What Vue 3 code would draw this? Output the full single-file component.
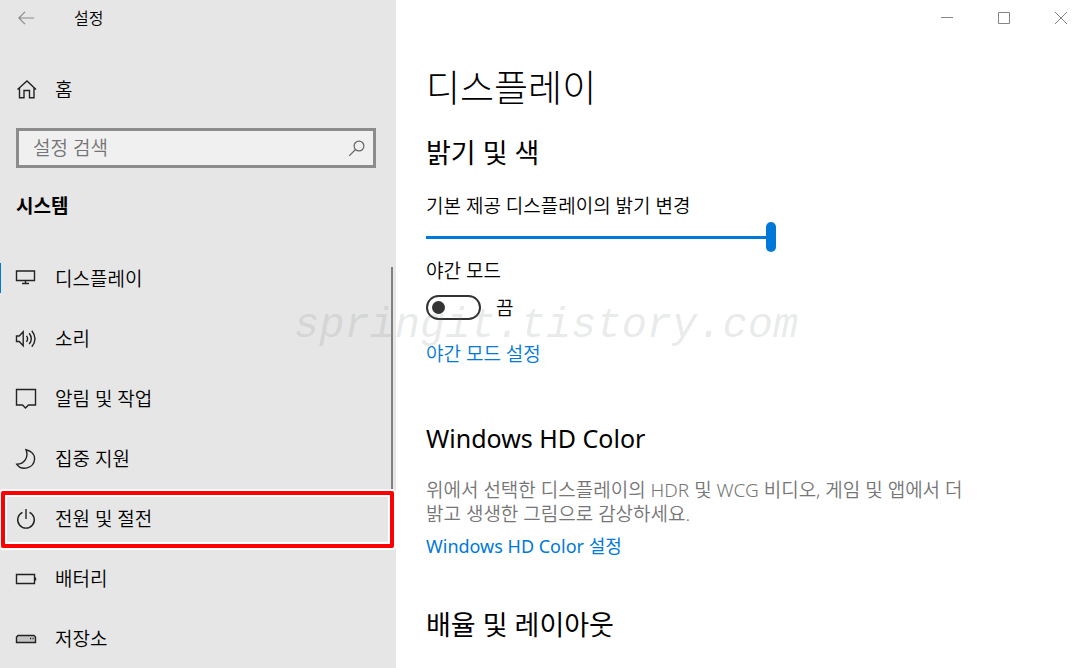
<script setup>
import { ref } from 'vue'

const query = ref('')
const brightness = ref(100)
const nightMode = ref(false)

const items = [
  { id: 'display', label: '디스플레이', current: true },
  { id: 'sound', label: '소리' },
  { id: 'notify', label: '알림 및 작업' },
  { id: 'focus', label: '집중 지원' },
  { id: 'power', label: '전원 및 절전', marked: true },
  { id: 'battery', label: '배터리' },
  { id: 'storage', label: '저장소' },
]
</script>

<template>
  <div class="window">
    <aside class="sidebar">
      <header class="titlebar">
        <button class="back" type="button" aria-label="뒤로">
          <svg width="16" height="14" viewBox="0 0 16 14"><path d="M7 .8 .8 7 7 13.200M.8 7H16" /></svg>
        </button>
        <span class="app-name">설정</span>
      </header>

      <a class="row home" href="#home">
        <svg class="icon" width="22" height="22" viewBox="0 0 22 22"><path d="M2.500 11.500 12 3l9 8.500M4.500 10v9.700h4.500v-7.200h5.500v7.200H19V10" /></svg>
        <span>홈</span>
      </a>

      <div class="search">
        <input v-model="query" type="text" placeholder="설정 검색" aria-label="설정 검색" />
        <svg width="18" height="18" viewBox="0 0 18 18"><circle cx="12" cy="7" r="4.900" /><path d="M8.500 10.500 2.200 16.800" /></svg>
      </div>

      <h2 class="group">시스템</h2>

      <nav class="nav">
        <a
          v-for="item in items"
          :key="item.id"
          class="row"
          :class="{ current: item.current, marked: item.marked }"
          :href="'#' + item.id"
        >
          <svg class="icon" width="22" height="22" viewBox="0 0 22 22">
            <path v-if="item.id === 'display'" d="M1.500 4h18v9.500h-18zM10.500 13.500v3M7 16.500h7" />
            <path v-else-if="item.id === 'sound'" d="M1.500 9h2.700l4-4.300v14l-4-4.200H1.500zM11.500 8.800q2.200 3 0 6M14.200 6.300q4.200 5.400 0 10.800M16.800 3.700q6.400 8 0 16" />
            <path v-else-if="item.id === 'notify'" d="M1.500 2.500h19v15.500h-7l-3 3-3-3h-6z" />
            <path v-else-if="item.id === 'focus'" d="M11 2.700C17 4 20 8 19.500 12.700 18.500 21.500 6.500 24 1.800 17.300 9.500 17 14 10 11 2.700z" />
            <path v-else-if="item.id === 'power'" d="M7.500 5.300a8.300 8.300 0 1 0 7 0M11 2v10" />
            <g v-else-if="item.id === 'battery'"><path d="M1.500 7.500h18v9h-18z" /><path d="M20.500 10.500v3" /></g>
            <g v-else>
              <path class="drive" d="M3 8.500h16l1.500 1.500v5.500h-19V10z" />
              <path d="M15 11.500h1.200M17.500 11.500h1.200" />
            </g>
          </svg>
          <span>{{ item.label }}</span>
        </a>
        <div class="scrollbar"></div>
      </nav>
    </aside>

    <main class="content">
      <div class="controls">
        <button type="button" aria-label="최소화"><svg width="14" height="14" viewBox="0 0 14 14"><path d="M1 6.500h12" /></svg></button>
        <button type="button" aria-label="최대화"><svg width="14" height="14" viewBox="0 0 14 14"><path d="M1.500 1.500h11v11h-11z" /></svg></button>
        <button type="button" aria-label="닫기"><svg width="14" height="14" viewBox="0 0 14 14"><path d="m1 1 12 12M13 1 1 13" /></svg></button>
      </div>

      <div class="page">
        <h1>디스플레이</h1>

        <h2 class="first">밝기 및 색</h2>
        <label class="slider-label" for="brightness">기본 제공 디스플레이의 밝기 변경</label>
        <input id="brightness" v-model="brightness" class="slider" type="range" min="0" max="100" />

        <label class="night-label" for="night">야간 모드</label>
        <div class="toggle-row">
          <input id="night" v-model="nightMode" class="toggle" type="checkbox" role="switch" />
          <span>{{ nightMode ? '켬' : '끔' }}</span>
        </div>
        <a class="night-link" href="#night-settings">야간 모드 설정</a>

        <h2 class="hd">Windows HD Color</h2>
        <p>위에서 선택한 디스플레이의 HDR 및 WCG 비디오, 게임 및 앱에서 더 밝고 생생한 그림으로 감상하세요.</p>
        <a class="hd-link" href="#hd-color">Windows HD Color 설정</a>

        <h2 class="scale">배율 및 레이아웃</h2>
      </div>
    </main>

    <div class="watermark">springit.tistory.com</div>
  </div>
</template>

<style>
body {
  margin: 0;
  background: #fff;
}
</style>

<style scoped>
.window {
  position: relative;
  display: flex;
  min-height: 100vh;
  font-family: "Noto Sans", "Noto Sans CJK KR", sans-serif;
  font-size: 19px;
  font-weight: 350;
  line-height: 24px;
  color: #000;
  word-break: keep-all;
}
svg {
  display: block;
  flex: none;
  fill: none;
  stroke: #222;
  stroke-width: 1.4;
}
.drive {
  fill: #c4c4c4;
}
button {
  display: flex;
  align-items: center;
  justify-content: center;
  padding: 0;
  border: 0;
  background: none;
}
a {
  color: #0078d7;
  text-decoration: none;
}
h1,
h2,
p {
  margin: 0;
}
.sidebar {
  flex: 0 0 396px;
  background: #e6e6e6;
}
.titlebar {
  display: flex;
  align-items: center;
  height: 36px;
}
.back {
  width: 52px;
  height: 36px;
}
.back svg {
  stroke: #8a8a8a;
  stroke-width: 1.2;
}
.app-name {
  margin-left: 22px;
  font-size: 16px;
}
.row {
  position: relative;
  display: flex;
  align-items: center;
  gap: 18px;
  height: 60px;
  padding-left: 15px;
  color: #000;
}
.row span {
  padding-top: 2px;
}
.home {
  margin-top: 23px;
}
.search {
  display: flex;
  align-items: center;
  height: 34px;
  margin: 9px 20px 0 16px;
  padding: 0 8px 0 14px;
  border: 3px solid #8c8c8c;
  background: #f0f0f0;
}
.search input {
  flex: 1;
  min-width: 0;
  padding: 0;
  border: 0;
  outline: 0;
  background: none;
  font: inherit;
  color: #000;
}
.search input::placeholder {
  color: #747474;
  opacity: 1;
}
.search svg {
  stroke: #666;
  stroke-width: 1.2;
}
.group {
  margin: 26px 0 0 16px;
  font-size: 19px;
  font-weight: 700;
}
.nav {
  position: relative;
  margin-top: 30px;
}
.current::before {
  content: "";
  position: absolute;
  left: 0;
  top: 15px;
  width: 1px;
  height: 30px;
  background: #0078d7;
}
.marked::after {
  content: "";
  position: absolute;
  inset: 3px 2px 0 1px;
  border: 4px solid #f00;
  border-radius: 2px;
  box-shadow: 0 0 0 2px #fff, inset 0 0 0 2px #fff;
}
.scrollbar {
  position: absolute;
  top: 19px;
  right: 3px;
  width: 2px;
  height: 222px;
  background: #808080;
}
.content {
  flex: 1;
  min-width: 0;
}
.controls {
  display: flex;
  justify-content: flex-end;
  height: 36px;
  margin-right: -6px;
}
.controls button {
  width: 57px;
  height: 36px;
}
.controls svg {
  stroke: #858585;
  stroke-width: 1;
}
.page {
  display: flex;
  flex-direction: column;
  align-items: flex-start;
  padding: 27px 30px 24px 30px;
}
h1 {
  font-size: 37px;
  font-weight: 300;
  line-height: 50px;
}
.page h2 {
  font-size: 27px;
  font-weight: 400;
  line-height: 36px;
}
.page .first {
  margin-top: 22px;
}
.slider-label {
  margin-top: 23px;
}
.slider {
  appearance: none;
  width: 350px;
  max-width: 100%;
  height: 30px;
  margin: 4px 0 0;
  background: linear-gradient(#0078d7, #0078d7) center / 100% 3px no-repeat;
}
.slider::-webkit-slider-thumb {
  appearance: none;
  width: 10px;
  height: 30px;
  border-radius: 5px;
  background: #0078d7;
}
.night-label {
  margin-top: 7px;
}
.toggle-row {
  display: flex;
  align-items: center;
  gap: 15px;
  height: 25px;
  margin-top: 12px;
}
.toggle {
  appearance: none;
  display: flex;
  align-items: center;
  box-sizing: border-box;
  width: 55px;
  height: 25px;
  margin: 0;
  padding: 0 4px;
  border: 2px solid #333;
  border-radius: 13px;
}
.toggle::before {
  content: "";
  width: 13px;
  height: 13px;
  border-radius: 50%;
  background: #333;
}
.toggle:checked::before {
  margin-left: auto;
}
.night-link {
  margin-top: 22px;
}
.page .hd {
  margin-top: 54px;
  font-size: 25px;
}
p {
  max-width: 560px;
  margin-top: 22px;
  color: #767676;
}
.hd-link {
  margin-top: 8px;
  font-size: 18px;
  font-weight: 400;
}
.page .scale {
  margin-top: 49px;
}
.watermark {
  position: absolute;
  left: 294px;
  top: 302px;
  font-family: "Liberation Mono", monospace;
  font-size: 42px;
  font-style: italic;
  line-height: 48px;
  color: rgba(120, 130, 130, 0.17);
  pointer-events: none;
}
</style>
